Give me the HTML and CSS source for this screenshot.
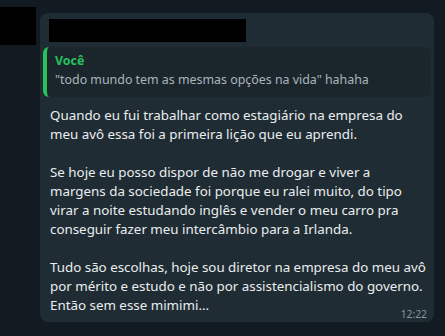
FILE: index.html
```html
<!DOCTYPE html>
<html lang="pt-BR">
<head>
<meta charset="utf-8">
<link rel="stylesheet" href="styles.css">
</head>
<body>
<div class="chat">
  <div class="avatar-redact"></div>
  <div class="bubble">
    <div class="header"><div class="redact"></div></div>
    <div class="quote">
      <div class="quote-author">Você</div>
      <div class="quote-text">"todo mundo tem as mesmas opções na vida" hahaha</div>
    </div>
    <div class="body">
      <p>Quando eu fui trabalhar como estagiário na empresa do<br>meu avô essa foi a primeira lição que eu aprendi.</p>
      <p>Se hoje eu posso dispor de não me drogar e viver a<br>margens da sociedade foi porque eu ralei muito, do tipo<br>virar a noite estudando inglês e vender o meu carro pra<br>conseguir fazer meu intercâmbio para a Irlanda.</p>
      <p>Tudo são escolhas, hoje sou diretor na empresa do meu avô<br>por mérito e estudo e não por assistencialismo do governo.<br>Então sem esse mimimi...</p>
    </div>
    <div class="meta">12:22</div>
  </div>
</div>
</body>
</html>
```
FILE: styles.css
```css
html, body {
  margin: 0;
  padding: 0;
}
body {
  background: #111b21;
  width: 445px;
  height: 336px;
  overflow: hidden;
  font-family: "Noto Sans", "Open Sans", sans-serif;
}
.chat {
  position: relative;
  padding: 13px 0 0 40px;
}
.avatar-redact {
  position: absolute;
  left: 0;
  top: 7px;
  width: 36px;
  height: 38px;
  background: #000;
}
.bubble {
  width: 394px;
  box-sizing: border-box;
  height: 309px;
  padding: 3px 3px 0 3px;
  background: #202c33;
  border-radius: 8px;
}
.header {
  height: 31px;
  box-sizing: border-box;
  padding: 3px 0 0 6px;
}
.redact {
  width: 197px;
  height: 23px;
  background: #000;
}
.quote {
  height: 50px;
  box-sizing: border-box;
  border-left: 4px solid #27c25c;
  border-radius: 6px;
  background: #1b262c;
  padding: 5px 0 0 8px;
}
.quote-author {
  color: #27c25c;
  font-weight: 700;
  font-size: 12.4px;
  line-height: 17px;
}
.quote-text {
  color: #aab5bb;
  font-size: 12.4px;
  line-height: 21px;
}
.body {
  padding: 9px 0 0 7px;
  color: #e9edef;
  font-size: 13.35px;
  line-height: 19px;
}
.body p {
  margin: 0 0 19px 0;
}
.body p:last-child {
  margin-bottom: 0;
}
.meta {
  text-align: right;
  padding-right: 4px;
  margin-top: -8px;
  color: #8696a0;
  font-size: 10.3px;
  line-height: 14px;
}
```
